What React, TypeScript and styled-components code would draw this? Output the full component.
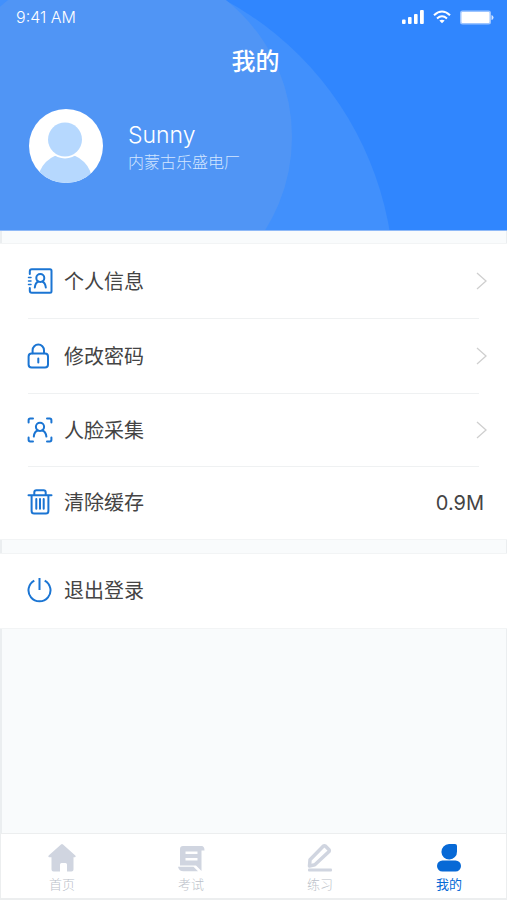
import React from "react";
import styled, { createGlobalStyle } from "styled-components";

const GlobalStyle = createGlobalStyle`
  * { box-sizing: border-box; }
  body { margin: 0; background: #f9fafc; }
  button { font: inherit; color: inherit; background: none; border: 0; padding: 0; cursor: pointer; }
`;

const Page = styled.div`
  min-height: 100vh;
  display: flex;
  flex-direction: column;
  background: #f9fbfc;
  font-family: Inter, "Noto Sans CJK SC", sans-serif;
  color: #444;
`;

const Header = styled.header`
  position: relative;
  overflow: hidden;
  isolation: isolate;
  height: 231px;
  background: #3086fe;
  color: #fff;
  border-bottom: 1px solid #8fb9f7;

  &::before,
  &::after {
    content: "";
    position: absolute;
    z-index: -1;
    border-radius: 50%;
  }
  &::before {
    left: -252px;
    top: -39px;
    width: 646px;
    height: 646px;
    background: #4190fc;
  }
  &::after {
    left: -58px;
    top: -38px;
    width: 350px;
    height: 350px;
    background: #5095f5;
  }
`;

const StatusBar = styled.div`
  display: flex;
  align-items: center;
  justify-content: space-between;
  height: 34px;
  padding: 0 13px 0 16px;
  font-size: 16px;
  font-weight: 300;
`;

const StatusIcons = styled.div`
  display: flex;
  align-items: center;
  gap: 9px;
`;

const Title = styled.h1`
  margin: 10px 0 0;
  padding-left: 4px;
  text-align: center;
  font-size: 24px;
  line-height: 36px;
  font-weight: 500;
`;

const Profile = styled.section`
  display: flex;
  align-items: center;
  gap: 24px;
  margin-top: 28px;
  padding: 0 28px;
`;

const Person = styled.div`
  display: flex;
  flex-direction: column;
  padding-top: 2px;
`;

const Name = styled.span`
  font-size: 23px;
  line-height: 30px;
  font-weight: 300;
`;

const Company = styled.span`
  font-size: 16px;
  line-height: 24px;
  font-weight: 300;
  color: #d3e6ff;
`;

const Gap = styled.div<{ $size?: number }>`
  height: ${(p) => (p.$size ? `${p.$size}px` : "auto")};
  flex: ${(p) => (p.$size ? "none" : "1 0 0")};
  border-left: 2px solid #ebeef0;
  border-right: 1px solid #ebeef0;
`;

const Card = styled.section`
  background: #fff;
  border-top: 1px solid #f2f4f5;
  border-bottom: 1px solid #f2f4f5;
`;

const Row = styled.button<{ $height: number }>`
  display: flex;
  align-items: center;
  width: 100%;
  height: ${(p) => p.$height}px;
  padding: 0 20px 2px 27px;
  text-align: left;
  font-size: 20px;
`;

const Divider = styled.hr`
  height: 1px;
  margin: -1px 28px 0;
  border: 0;
  background: #eff1f2;
`;

const Label = styled.span`
  flex: 1;
  margin-left: 11px;
  padding-top: 2px;
  line-height: 30px;
`;

const Value = styled.span`
  padding: 2px 3px 0 0;
`;

const TabBar = styled.nav`
  display: flex;
  justify-content: space-between;
  height: 67px;
  padding: 8px 43px 0 47px;
  background: #fff;
  border: solid #eceeef;
  border-width: 1px 1px 2px 1px;
`;

const Tab = styled.button<{ $active?: boolean }>`
  display: flex;
  flex-direction: column;
  align-items: center;
  width: 28px;
  font-size: 13px;
  line-height: 18px;
  font-weight: ${(p) => (p.$active ? 400 : 300)};
  white-space: nowrap;
  color: ${(p) => (p.$active ? "#0769d6" : "#bbbfc9")};

  svg {
    flex: none;
    margin-bottom: 3px;
    color: ${(p) => (p.$active ? "#0769d6" : "#d0d5e0")};
  }
`;

const line = {
  width: 26,
  height: 26,
  viewBox: "0 0 26 26",
  fill: "none",
  stroke: "#1b75d3",
  strokeWidth: 2,
  strokeLinecap: "round" as const,
  strokeLinejoin: "round" as const,
  "aria-hidden": true,
};

const InfoIcon = () => (
  <svg {...line}>
    <path d="M2.8 6V3.2Q2.8 1.2 4.8 1.2H23Q24.5 1.2 24.5 2.7V23.3Q24.5 24.8 23 24.8H4.8Q2.8 24.8 2.8 22.8V20" />
    <path d="M1.5 9.5H4M1.5 13H4M1.5 16.5H4" strokeWidth="1.5" />
    <circle cx="13.3" cy="10" r="4" />
    <path d="M7.8 19.5Q8.3 14.8 11.3 13.5M15.3 13.5Q18.3 14.8 18.8 19.5" />
  </svg>
);

const LockIcon = () => (
  <svg {...line}>
    <rect x="1.6" y="10.4" width="19.4" height="14" rx="3" />
    <path d="M5.6 10.2V7.2a5.7 5.7 0 0 1 11.4 0v3M11.3 15.5v4" />
  </svg>
);

const FaceIcon = () => (
  <svg {...line}>
    <path d="M1.6 5.5V3.2Q1.6 1.6 3.2 1.6H6M20 1.6h2.8q1.6 0 1.6 1.6V5.5M24.4 20.5v2.3q0 1.6-1.6 1.6H20M6 24.4H3.2q-1.6 0-1.6-1.6V20.5" />
    <circle cx="13" cy="9.8" r="4.1" />
    <path d="M6.8 19.6Q7.2 14.4 11 13.5M15 13.5Q18.8 14.4 19.4 19.6" />
  </svg>
);

const TrashIcon = () => (
  <svg {...line}>
    <path d="M1.5 6.2h23M7.3 6V3.4Q7.3 1.3 9.4 1.3h7.2q2.1 0 2.1 2.1V6M4.6 6.4V22q0 2.5 2.5 2.5h11.8q2.500 0 2.5-2.5V6.4M9.3 10v9.7M13 10v9.7M16.700 10v9.7" />
  </svg>
);

const PowerIcon = () => (
  <svg {...line} strokeLinecap="butt">
    <path d="M7.3 3.6A11 11 0 1 0 17.7 3.6M12.5 1v12" />
  </svg>
);

const Chevron = () => (
  <svg width="12" height="18" viewBox="0 0 12 18" fill="none" stroke="#cfcfcf" strokeWidth="1.3" aria-hidden="true">
    <path d="M2 1l9 8-9 8" />
  </svg>
);

const Avatar = () => (
  <svg width="76" height="76" viewBox="0 0 76 76" role="img" aria-label="Sunny">
    <defs>
      <clipPath id="avatar-disc">
        <circle cx="38" cy="38" r="37" />
      </clipPath>
    </defs>
    <circle cx="38" cy="38" r="37" fill="#fff" />
    <g clipPath="url(#avatar-disc)" fill="#b6d8fe">
      <circle cx="37" cy="73" r="27" />
      <circle cx="37" cy="31.5" r="19" fill="#fff" />
      <circle cx="37" cy="31.5" r="17" />
    </g>
  </svg>
);

const SignalIcon = () => (
  <svg width="22" height="14" viewBox="0 0 22 14" fill="#fff" aria-hidden="true">
    <rect x="0" y="9.5" width="3.6" height="4.5" rx="1" />
    <rect x="6" y="7" width="3.6" height="7" rx="1" />
    <rect x="12" y="4" width="3.6" height="10" rx="1" />
    <rect x="18" y="0" width="3.8" height="14" rx="1" />
  </svg>
);

const WifiIcon = () => (
  <svg width="18" height="14" viewBox="0 0 18 14" fill="none" stroke="#fff" strokeWidth="2" aria-hidden="true">
    <path d="M1 5.3Q9-2.3 17 5.3M4 8.5Q9 4.1 14 8.5" />
    <path d="M6.3 10.6Q9 8.7 11.7 10.6L9 13.3z" fill="#fff" stroke="none" />
  </svg>
);

const BatteryIcon = () => (
  <svg width="34" height="15" viewBox="0 0 34 15" aria-hidden="true">
    <rect x="0" y="0.5" width="31" height="14" rx="2.5" fill="#9dc5ff" />
    <rect x="1.5" y="2" width="28" height="11" rx="1" fill="#fff" />
    <path d="M31.5 5q2 .5 2 2.5t-2 2.5z" fill="#d5e6ff" />
  </svg>
);

const tabIcon = { width: 28, height: 30, viewBox: "0 0 28 30", fill: "currentColor", "aria-hidden": true };

const HomeIcon = () => (
  <svg {...tabIcon}>
    <path d="M13 2.5q1-.9 2 0l12.3 11q1 1.500-.7 1.700H25.5v12.300q0 2-2 2h-4.500V22.500q0-1.500-1.500-1.500h-4q-1.500 0-1.500 1.500v7H5.500q-2 0-2-2V15.200H1.400Q-.3 15 .7 13.500z" />
  </svg>
);

const ExamIcon = () => (
  <svg {...tabIcon}>
    <path fillRule="evenodd" d="M6 4H24.5q3 0 3 4.5H24.5V29l-5.5-5.5H3V7q0-3 3-3zM8.5 9.5v2.500h12v-2.500zM8.500 16v2.500h12V16z" />
    <path d="M1 24.700H16.500l4.500 4.500H6.500q-4.500 0-5.500-4.500z" />
  </svg>
);

const PracticeIcon = () => (
  <svg {...tabIcon}>
    <path
      d="M4 17.800 17.200 4.200q1.200-1 2.400 0l3.200 3.200q1 1.200 0 2.400L8.800 22.800 3.500 24z"
      fill="none"
      stroke="currentColor"
      strokeWidth="3.5"
      strokeLinejoin="round"
    />
    <rect x="2" y="26.5" width="24" height="3" rx="1" />
  </svg>
);

const MineIcon = () => (
  <svg {...tabIcon}>
    <path d="M14 2h6q2 0 2 2v5.500A7.800 7.800 0 1 1 14 2z" />
    <rect x="2" y="18.5" width="24" height="11" rx="5.5" />
  </svg>
);

const settings = [
  { label: "个人信息", icon: <InfoIcon />, height: 75 },
  { label: "修改密码", icon: <LockIcon />, height: 75 },
  { label: "人脸采集", icon: <FaceIcon />, height: 73 },
  { label: "清除缓存", icon: <TrashIcon />, height: 72, value: "0.9M" },
];

const tabs = [
  { label: "首页", icon: <HomeIcon /> },
  { label: "考试", icon: <ExamIcon /> },
  { label: "练习", icon: <PracticeIcon /> },
  { label: "我的", icon: <MineIcon />, active: true },
];

export default function App() {
  return (
    <Page lang="zh-CN">
      <GlobalStyle />
      <Header>
        <StatusBar>
          <span>9:41 AM</span>
          <StatusIcons>
            <SignalIcon />
            <WifiIcon />
            <BatteryIcon />
          </StatusIcons>
        </StatusBar>
        <Title>我的</Title>
        <Profile>
          <Avatar />
          <Person>
            <Name>Sunny</Name>
            <Company>内蒙古乐盛电厂</Company>
          </Person>
        </Profile>
      </Header>
      <Gap $size={12} />
      <Card>
        {settings.map((s, i) => (
          <React.Fragment key={s.label}>
            {i > 0 && <Divider />}
            <Row type="button" $height={s.height}>
              {s.icon}
              <Label>{s.label}</Label>
              {s.value ? <Value>{s.value}</Value> : <Chevron />}
            </Row>
          </React.Fragment>
        ))}
      </Card>
      <Gap $size={13} />
      <Card>
        <Row type="button" $height={74}>
          <PowerIcon />
          <Label>退出登录</Label>
        </Row>
      </Card>
      <Gap />
      <TabBar>
        {tabs.map((t) => (
          <Tab key={t.label} type="button" $active={t.active} aria-current={t.active ? "page" : undefined}>
            {t.icon}
            {t.label}
          </Tab>
        ))}
      </TabBar>
    </Page>
  );
}
